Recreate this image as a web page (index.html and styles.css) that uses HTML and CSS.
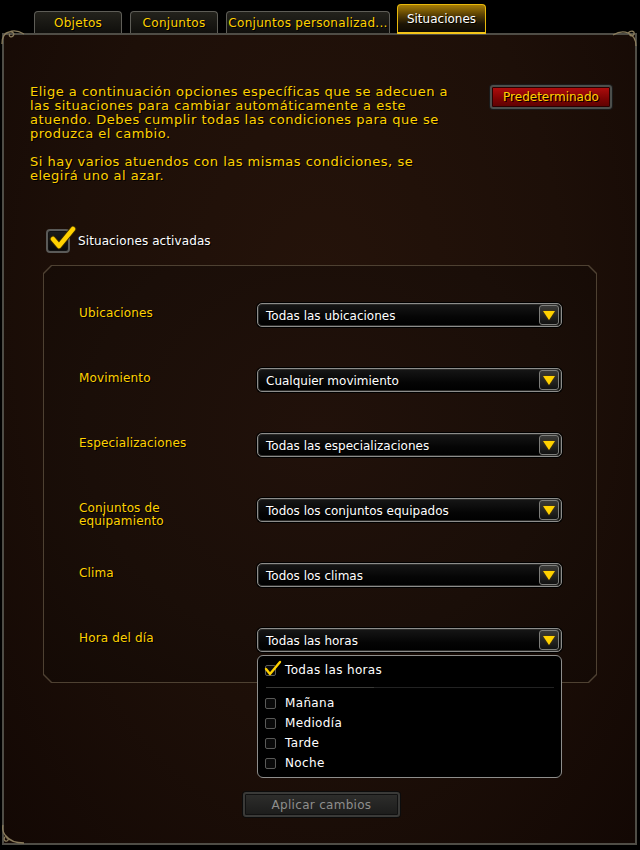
FILE: index.html
```html
<!DOCTYPE html>
<html lang="es">
<head>
    <meta charset="UTF-8">
    <meta name="viewport" content="width=device-width, initial-scale=1.0">
    <title>Situaciones</title>
    <link rel="stylesheet" href="styles.css">
</head>
<body>
    <nav class="tabs">
        <div class="tab">Objetos</div>
        <div class="tab">Conjuntos</div>
        <div class="tab tab-wide">Conjuntos personalizad...</div>
        <div class="tab active">Situaciones</div>
    </nav>

    <div class="frame">
        <!-- scroll ornaments on the frame corners -->
        <svg class="ornament top-left" width="24" height="16" viewBox="0 0 24 16">
            <path d="M1 15 C1 8 3 4 8 3 C12 2 14 5 12 7 C10 9 7 7 9 5 M8 3 C12 1 18 2 23 5" fill="none" stroke="#8a7c5c" stroke-width="1.3"/>
        </svg>
        <svg class="ornament top-right" width="26" height="18" viewBox="0 0 26 18">
            <path d="M1 6 C6 3 12 2 16 4 C19 1 23 2 22 5 C21 8 17 7 18 5 M16 4 C21 6 24 10 24 17" fill="none" stroke="#8a7c5c" stroke-width="1.3"/>
        </svg>
        <svg class="ornament bottom-left" width="24" height="22" viewBox="0 0 24 22">
            <path d="M2 1 C1 6 3 10 5 12 C2 14 3 18 6 17 C8 16 7 13 5 14 M5 12 C8 16 14 19 23 19" fill="none" stroke="#8a7c5c" stroke-width="1.3"/>
        </svg>

        <div class="intro">
            <div class="intro-text">
                <p>Elige a continuación opciones específicas que se adecuen a<br>las situaciones para cambiar automáticamente a este<br>atuendo. Debes cumplir todas las condiciones para que se<br>produzca el cambio.</p>
                <p>Si hay varios atuendos con las mismas condiciones, se<br>elegirá uno al azar.</p>
            </div>
            <button class="btn-red">Predeterminado</button>
        </div>

        <label class="toggle">
            <span class="check-big">
                <svg width="30" height="28" viewBox="0 0 30 28">
                    <path d="M6 13 L12 20 L26 3" fill="none" stroke="#3a2a00" stroke-width="6.5" stroke-linecap="round" stroke-linejoin="round"/>
                    <path d="M6 13 L12 20 L26 3" fill="none" stroke="#ffd100" stroke-width="4.5" stroke-linecap="round" stroke-linejoin="round"/>
                </svg>
            </span>
            Situaciones activadas
        </label>

        <div class="panel">
            <div class="row">
                <span class="label">Ubicaciones</span>
                <div class="select"><span>Todas las ubicaciones</span><i class="arrow"></i></div>
            </div>
            <div class="row">
                <span class="label">Movimiento</span>
                <div class="select"><span>Cualquier movimiento</span><i class="arrow"></i></div>
            </div>
            <div class="row">
                <span class="label">Especializaciones</span>
                <div class="select"><span>Todas las especializaciones</span><i class="arrow"></i></div>
            </div>
            <div class="row">
                <span class="label">Conjuntos de<br>equipamiento</span>
                <div class="select"><span>Todos los conjuntos equipados</span><i class="arrow"></i></div>
            </div>
            <div class="row">
                <span class="label">Clima</span>
                <div class="select"><span>Todos los climas</span><i class="arrow"></i></div>
            </div>
            <div class="row">
                <span class="label">Hora del día</span>
                <div class="select open">
                    <span>Todas las horas</span><i class="arrow"></i>
                    <div class="menu">
                        <div class="opt">
                            <span class="box">
                                <svg class="tick" width="18" height="16" viewBox="0 0 18 16">
                                    <path d="M2 9 L6 14 L16 2" fill="none" stroke="#ffd100" stroke-width="2.4" stroke-linecap="round" stroke-linejoin="round"/>
                                </svg>
                            </span>
                            Todas las horas
                        </div>
                        <div class="sep"></div>
                        <div class="opt"><span class="box"></span>Mañana</div>
                        <div class="opt"><span class="box"></span>Mediodía</div>
                        <div class="opt"><span class="box"></span>Tarde</div>
                        <div class="opt"><span class="box"></span>Noche</div>
                    </div>
                </div>
            </div>
        </div>

        <div class="actions">
            <button class="btn-gray" disabled>Aplicar cambios</button>
        </div>
    </div>
</body>
</html>
```

FILE: styles.css
```css
*{
    margin: 0;
    padding: 0;
    box-sizing: border-box;
}
body{
    width: 640px;
    height: 850px;
    background-color: #000;
    font-family: "DejaVu Sans", "Noto Sans", sans-serif;
    font-size: 12px;
    color: #fff;
    overflow: hidden;
}

/* tabs */
.tabs{
    height: 33px;
    display: flex;
    align-items: flex-end;
    gap: 8px;
    padding-left: 34px;
    position: relative;
    z-index: 2;
}
.tab{
    width: 88px;
    height: 22px;
    padding-top: 1px;
    border: 1px solid #5e5d57;
    border-bottom: none;
    border-radius: 4px 4px 0 0;
    background: linear-gradient(#23221c, #100f0c);
    color: #ffd100;
    letter-spacing: 0.3px;
    text-align: center;
    line-height: 21px;
    text-shadow: 1px 1px 0 #000;
    white-space: nowrap;
    overflow: hidden;
}
.tab-wide{
    width: 164px;
    margin-right: -1px;
}
.tab.active{
    width: 89px;
    height: 30px;
    margin-bottom: -1px;
    padding: 0 0 2px;
    border: 1px solid #e8b90c;
    border-bottom: 2px solid #f4c51a;
    background: linear-gradient(#a77d05 0%, #5d4304 35%, #1c1405 70%, #0e0a03 100%);
    color: #fff;
    letter-spacing: 0;
    line-height: 28px;
}

/* main frame */
.frame{
    position: relative;
    width: 635px;
    height: 812px;
    margin-left: 2px;
    border: 2px solid #4f4d46;
    background: radial-gradient(ellipse at 50% 35%, #25130a 0%, #1d0f08 55%, #130804 100%);
}
.ornament{
    position: absolute;
}
.top-left{
    left: -3px;
    top: -6px;
}
.top-right{
    right: -3px;
    top: -6px;
}
.bottom-left{
    left: -3px;
    bottom: -3px;
}

.intro{
    display: flex;
    justify-content: space-between;
    align-items: flex-start;
    padding: 50px 23px 0 26px;
}
.intro-text p{
    font-size: 13px;
    line-height: 14px;
    letter-spacing: 0.5px;
    color: #ffd100;
    text-shadow: 1px 1px 0 #000;
}
.intro-text p + p{
    margin-top: 14px;
}
.btn-red{
    width: 122px;
    height: 24px;
    font-family: inherit;
    font-size: 12px;
    color: #ffd100;
    text-shadow: 1px 1px 0 #000;
    border: 2px solid #4c4f4c;
    border-radius: 3px;
    background: linear-gradient(#b10d0d, #7c0303 60%, #5c0202);
    box-shadow: inset 0 0 0 1px #2a0000, 0 0 0 1px #1a1a1a;
}

/* enable checkbox */
.toggle{
    display: flex;
    align-items: center;
    gap: 8px;
    margin: 46px 0 0 42px;
    height: 24px;
    letter-spacing: 0.1px;
    text-shadow: 1px 1px 0 #000;
}
.check-big{
    position: relative;
    width: 24px;
    height: 24px;
    border: 2px solid #5a5a58;
    border-radius: 4px;
    background: linear-gradient(#1c1c1c, #080808);
    box-shadow: inset 0 0 0 1px #111;
}
.check-big svg{
    position: absolute;
    left: -1px;
    top: -5px;
}

/* options panel with cut corners */
.panel{
    position: relative;
    width: 554px;
    margin: 12px 0 0 39px;
    padding: 38px 35px 31px 36px;
    display: flex;
    flex-direction: column;
    gap: 41px;
}
.panel::before,
.panel::after{
    content: "";
    position: absolute;
    inset: 0;
    z-index: 0;
    clip-path: polygon(8px 0, calc(100% - 8px) 0, 100% 8px, 100% calc(100% - 8px), calc(100% - 8px) 100%, 8px 100%, 0 calc(100% - 8px), 0 8px);
}
.panel::before{
    background: #4e4132;
}
.panel::after{
    inset: 1px;
    background: radial-gradient(ellipse at 50% 40%, #21110a 0%, #1a0e08 60%, #140a05 100%);
}
.row{
    position: relative;
    z-index: 1;
    display: flex;
    align-items: flex-start;
    height: 24px;
}
.label{
    width: 178px;
    padding-top: 4px;
    line-height: 13px;
    color: #ffd100;
    letter-spacing: 0.15px;
    text-shadow: 1px 1px 0 #000;
}

/* dropdowns */
.select{
    position: relative;
    width: 305px;
    height: 24px;
    display: flex;
    align-items: center;
    justify-content: space-between;
    padding: 1px 2px 0 8px;
    border: 1px solid #8d8d8b;
    border-radius: 5px;
    background: linear-gradient(#161616, #050505 60%, #000);
    box-shadow: inset 0 0 0 1px #2c2c2a, 0 0 0 1px #000;
    text-shadow: 1px 1px 0 #000;
}
.arrow{
    position: relative;
    width: 20px;
    height: 20px;
    margin-top: -1px;
    border: 1px solid #7d7d7a;
    border-radius: 3px;
    background: linear-gradient(#3a3a38, #121212);
}
.arrow::after{
    content: "";
    position: absolute;
    left: 3px;
    top: 5px;
    border-left: 6px solid transparent;
    border-right: 6px solid transparent;
    border-top: 9px solid #ffd100;
    filter: drop-shadow(0 0 1px #5a3e00);
}

/* open list under "Hora del día" */
.menu{
    position: absolute;
    left: -1px;
    top: 26px;
    width: 305px;
    padding: 4px 0 4px 7px;
    border: 1px solid #8e8e8c;
    border-radius: 6px;
    background: #000;
    z-index: 3;
}
.opt{
    display: flex;
    align-items: center;
    gap: 9px;
    height: 20px;
    letter-spacing: 0.35px;
}
.box{
    position: relative;
    width: 11px;
    height: 11px;
    border: 1px solid #5a5a58;
    border-radius: 2px;
    background: #0a0a0a;
}
.tick{
    position: absolute;
    left: -2px;
    top: -6px;
}
.sep{
    width: 288px;
    height: 1px;
    margin: 7px 0 5px 1px;
    background: linear-gradient(90deg, #3a3a38 0 108px, #222 108px);
}

/* apply button */
.actions{
    display: flex;
    justify-content: center;
    padding-left: 4px;
    margin-top: 109px;
}
.btn-gray{
    width: 157px;
    height: 25px;
    font-family: inherit;
    font-size: 12px;
    letter-spacing: 0.3px;
    color: #8e8e8c;
    border: 2px solid #3a3a38;
    border-radius: 3px;
    background: linear-gradient(#2e2e2c, #1c1c1b);
    box-shadow: inset 0 0 0 1px #111, 0 0 0 1px #0c0c0c;
}
```
